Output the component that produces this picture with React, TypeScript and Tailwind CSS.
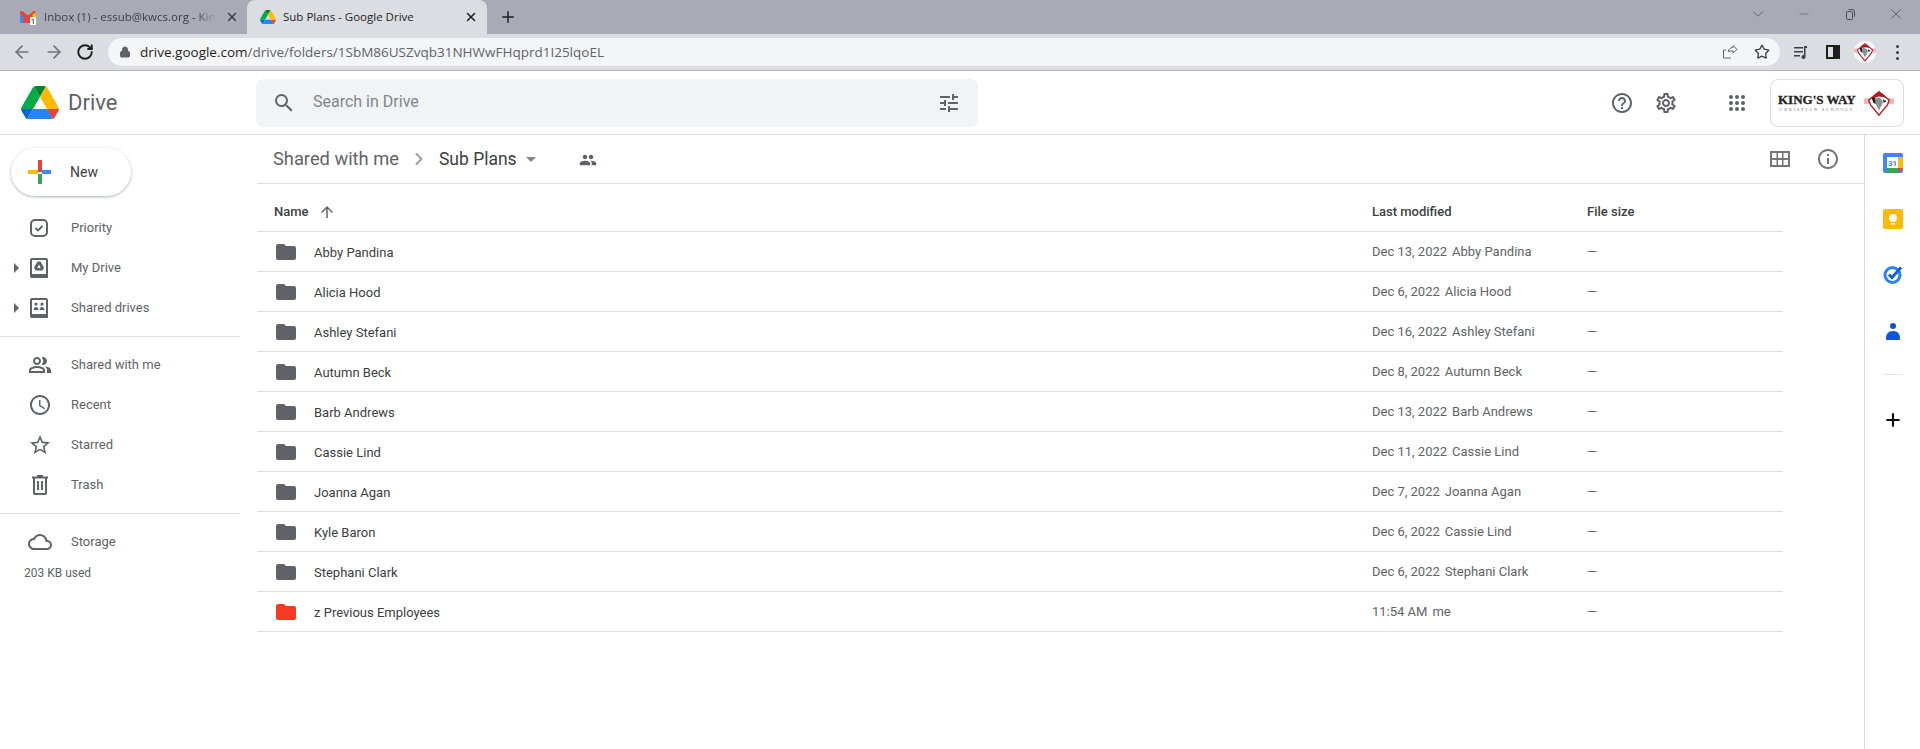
import {
  ArrowLeft,
  ArrowRight,
  ChevronDown,
  ChevronRight,
  Lock,
  Minus,
  Plus,
  RotateCw,
  Star,
  X,
} from "lucide-react";
import {
  MdAccessTime,
  MdArrowUpward,
  MdOutlineCloud,
  MdOutlineHelpOutline,
  MdOutlineInfo,
  MdOutlinePeopleAlt,
  MdOutlineSettings,
  MdOutlineStarBorder,
  MdPeople,
  MdSearch,
  MdTune,
} from "react-icons/md";

const rows = [
  { name: "Abby Pandina", date: "Dec 13, 2022", owner: "Abby Pandina" },
  { name: "Alicia Hood", date: "Dec 6, 2022", owner: "Alicia Hood" },
  { name: "Ashley Stefani", date: "Dec 16, 2022", owner: "Ashley Stefani" },
  { name: "Autumn Beck", date: "Dec 8, 2022", owner: "Autumn Beck" },
  { name: "Barb Andrews", date: "Dec 13, 2022", owner: "Barb Andrews" },
  { name: "Cassie Lind", date: "Dec 11, 2022", owner: "Cassie Lind" },
  { name: "Joanna Agan", date: "Dec 7, 2022", owner: "Joanna Agan" },
  { name: "Kyle Baron", date: "Dec 6, 2022", owner: "Cassie Lind" },
  { name: "Stephani Clark", date: "Dec 6, 2022", owner: "Stephani Clark" },
  { name: "z Previous Employees", date: "11:54 AM", owner: "me", red: true },
];

function DriveLogo({ size }: { size: number }) {
  return (
    <svg width={size} height={size * 0.89} viewBox="0 0 87.3 78">
      <path d="m6.6 66.85 3.85 6.65c.8 1.4 1.95 2.5 3.3 3.3l13.75-23.8h-27.5c0 1.55.4 3.1 1.2 4.5z" fill="#0066da" />
      <path d="m43.65 25-13.75-23.8c-1.35.8-2.5 1.9-3.3 3.3l-25.4 44a9.06 9.06 0 0 0 -1.2 4.5h27.5z" fill="#00ac47" />
      <path d="m73.55 76.8c1.35-.8 2.5-1.9 3.3-3.3l1.6-2.75 7.65-13.25c.8-1.4 1.2-2.95 1.2-4.5h-27.5l5.85 11.5z" fill="#ea4335" />
      <path d="m43.65 25 13.75-23.8c-1.35-.8-2.9-1.2-4.5-1.2h-18.5c-1.6 0-3.15.45-4.5 1.2z" fill="#00832d" />
      <path d="m59.8 53h-32.3l-13.75 23.8c1.35.8 2.9 1.2 4.5 1.2h50.8c1.6 0 3.15-.45 4.5-1.2z" fill="#2684fc" />
      <path d="m73.4 26.5-12.7-22c-.8-1.4-1.95-2.5-3.3-3.3l-13.75 23.8 16.15 28h27.45c0-1.55-.4-3.1-1.2-4.5z" fill="#ffba00" />
    </svg>
  );
}

function GmailIcon() {
  return (
    <svg width="16" height="16" viewBox="0 0 16 16" className="shrink-0">
      <path d="M0 3.500C0 2 1.500 1.500 2.500 2.300L8 6.500l5.500-4.200C14.500 1.500 16 2 16 3.500V8h-5v6H13 3V7.500L0 5.500z" fill="#ea4335" />
      <path d="M0 5v8c0 .6.400 1 1 1h2.500V7.500z" fill="#4285f4" />
      <path d="M12.500 5.500L16 3v5h-3.500z" fill="#fbbc04" />
      <rect x="10" y="8" width="6" height="8" fill="#fff" />
      <text x="13" y="15" fontSize="8" textAnchor="middle" fill="#111" fontFamily="Roboto, sans-serif">1</text>
    </svg>
  );
}

function Crest({ size }: { size: number }) {
  return (
    <svg width={size} height={size} viewBox="0 0 32 32">
      <circle cx="16" cy="16" r="16" fill="#fff" />
      <path d="M0 11h32v6H0z" fill="#efb7bd" />
      <path d="M16 4l11 9-2 5-9 11-9-11-2-5z" fill="#fff" stroke="#b71c1c" strokeWidth="1.500" />
      <path d="M9 11q2-6 8-6 5 1 6 5l-7-1z" fill="#b71c1c" />
      <path d="M8 10h4l1 7-3-1z" fill="#222" />
      <path d="M13 10q7 0 7 6l-4 8-4-8z" fill="#8b8f96" />
      <path d="M20 12l4 2-3 2z" fill="#222" />
    </svg>
  );
}

function Folder({ red }: { red?: boolean }) {
  return (
    <svg width="24" height="24" viewBox="0 0 24 24" fill={red ? "#f83a22" : "#5f6368"}>
      <path d="M10 4H4c-1.1 0-2 .9-2 2v12c0 1.1.9 2 2 2h16c1.1 0 2-.9 2-2V8c0-1.1-.9-2-2-2h-8l-2-2z" />
    </svg>
  );
}

function Caret() {
  return <span className="h-0 w-0 border-y-[5px] border-l-[5px] border-y-transparent border-l-[#5f6368]" />;
}

function BookIcon({ shared }: { shared?: boolean }) {
  return (
    <svg width="24" height="24" viewBox="0 0 24 24" fill="none">
      <path d="M4 3h14a1 1 0 0 1 1 1v17H4a1 1 0 0 1-1-1V4a1 1 0 0 1 1-1z" stroke="#5f6368" strokeWidth="2" />
      <rect x="3" y="18" width="16" height="4" fill="#5f6368" />
      {shared ? (
        <path d="M8 6.500a1.600 1.600 0 1 1 0 3.200 1.600 1.600 0 0 1 0-3.200zm6 0a1.600 1.600 0 1 1 0 3.200 1.600 1.600 0 0 1 0-3.200zM5.500 14c0-2 1.500-3 2.500-3s2.500 1 2.500 3zm6 0c0-2 1.500-3 2.500-3s2.500 1 2.500 3z" fill="#5f6368" />
      ) : (
        <path d="M9.500 5.500h3l3.500 6-1.500 3h-7L6 11.500zM11 8.500l-1.700 3.500h3.400z" fill="#5f6368" fillRule="evenodd" />
      )}
    </svg>
  );
}

function PriorityIcon() {
  return (
    <svg width="24" height="24" viewBox="0 0 24 24" fill="none" stroke="#5f6368">
      <rect x="3" y="4" width="16" height="16" rx="4" strokeWidth="2" />
      <path d="M7.500 12l2.500 2.500 4.500-4.500" strokeWidth="1.800" />
    </svg>
  );
}

function TrashIcon() {
  return (
    <svg width="24" height="24" viewBox="0 0 24 24" fill="none" stroke="#5f6368" strokeWidth="2">
      <path d="M4 4.500h16M9 3h6M6 4.500V20a1 1 0 0 0 1 1h10a1 1 0 0 0 1-1V4.500M10 8v9M14 8v9" />
    </svg>
  );
}

function NavItem({ icon, label, caret }: { icon: React.ReactNode; label: string; caret?: boolean }) {
  return (
    <div className="flex h-10 items-center">
      <div className="flex w-[28px] justify-end pr-[9px]">{caret && <Caret />}</div>
      <div className="flex w-[24px] justify-center">{icon}</div>
      <span className="ml-[19px] text-[13px] text-[#5f6368]">{label}</span>
    </div>
  );
}

function Sidebar() {
  return (
    <aside className="w-[257px] shrink-0">
      <div className="pl-[11px] pt-[13px]">
        <button className="flex h-12 w-[120px] items-center rounded-full bg-white pl-4 shadow-[0_1px_3px_rgba(60,64,67,0.4)]">
          <svg width="24" height="24" viewBox="0 0 24 24">
            <rect x="11" y="0" width="4" height="12" fill="#ea4335" />
            <rect x="15" y="10" width="10" height="4" fill="#4285f4" />
            <rect x="11" y="14" width="4" height="10" fill="#34a853" />
            <rect x="1" y="10" width="10" height="4" fill="#fbbc04" />
          </svg>
          <span className="ml-[19px] text-[14px] text-[#3c4043]">New</span>
        </button>
      </div>
      <div className="mt-3 w-[240px] border-b border-[#dadce0] pb-2">
        <NavItem icon={<PriorityIcon />} label="Priority" />
        <NavItem icon={<BookIcon />} label="My Drive" caret />
        <NavItem icon={<BookIcon shared />} label="Shared drives" caret />
      </div>
      <div className="mt-2 w-[240px] border-b border-[#dadce0] pb-2">
        <NavItem icon={<MdOutlinePeopleAlt size={24} color="#5f6368" />} label="Shared with me" />
        <NavItem icon={<MdAccessTime size={24} color="#5f6368" />} label="Recent" />
        <NavItem icon={<MdOutlineStarBorder size={24} color="#5f6368" />} label="Starred" />
        <NavItem icon={<TrashIcon />} label="Trash" />
      </div>
      <div className="mt-2">
        <NavItem icon={<MdOutlineCloud size={26} color="#5f6368" />} label="Storage" />
        <p className="ml-6 mt-[2px] text-[12px] text-[#5f6368]">203 KB used</p>
      </div>
    </aside>
  );
}

function TableHeader() {
  return (
    <div className="mr-[81px] flex h-12 items-center border-b border-[#dadce0] pt-[8px] text-[13px] font-medium text-[#3c4043]">
      <div className="flex w-[1115px] items-center pl-[17px]">
        <span>Name</span>
        <MdArrowUpward size={18} color="#5f6368" className="ml-[9px]" />
      </div>
      <div className="w-[215px]">Last modified</div>
      <div>File size</div>
    </div>
  );
}

function FileRow({ name, date, owner, red }: { name: string; date: string; owner: string; red?: boolean }) {
  return (
    <div className="mr-[81px] flex h-10 items-center border-b border-[#dadce0] text-[13px]">
      <div className="flex w-[1115px] items-center pl-[17px]">
        <Folder red={red} />
        <span className="ml-[16px] pt-[2px] font-[450] text-[#3c4043]">{name}</span>
      </div>
      <div className="flex w-[215px] gap-[5px] text-[#5f6368]">
        <span>{date}</span>
        <span>{owner}</span>
      </div>
      <div className="text-[#5f6368]">—</div>
    </div>
  );
}

function RightRail() {
  return (
    <aside className="flex w-[56px] shrink-0 flex-col items-center border-l border-[#dadce0] pt-[18px]">
      <svg width="20" height="20" viewBox="0 0 20 20">
        <rect width="20" height="20" rx="2" fill="#4285f4" />
        <rect x="15" y="4" width="5" height="12" fill="#fbbc04" />
        <rect x="4" y="15" width="12" height="5" fill="#34a853" />
        <path d="M15 15h5l-5 5z" fill="#ea4335" />
        <rect x="4" y="4" width="11" height="11" fill="#fff" />
        <text x="9.500" y="13" fontSize="8" fontWeight="700" textAnchor="middle" fill="#4285f4" fontFamily="Roboto, sans-serif">31</text>
      </svg>
      <svg className="mt-[36px]" width="20" height="20" viewBox="0 0 20 20">
        <rect width="20" height="20" rx="2" fill="#ffba00" />
        <circle cx="10" cy="9" r="4" fill="#fff" />
        <rect x="8" y="14" width="4" height="1.500" fill="#fff" />
      </svg>
      <svg className="mt-[35px]" width="20" height="20" viewBox="0 0 20 20" fill="none">
        <circle cx="9.500" cy="11" r="7.500" stroke="#2684fc" strokeWidth="3" />
        <path d="M6 10.500l3 3 9-10" stroke="#1a5fd0" strokeWidth="3" />
      </svg>
      <svg className="mt-[37px]" width="20" height="20" viewBox="0 0 20 20">
        <circle cx="10" cy="5" r="3" fill="#0b57d0" />
        <path d="M3 18c0-5 2-8 7-8s7 3 7 8c0 1-1 1-1 1H4s-1 0-1-1z" fill="#0b57d0" />
      </svg>
      <div className="mt-[33px] h-px w-5 bg-[#e3e5e8]" />
      <Plus size={20} color="#111" className="mt-[35px]" strokeWidth={2.6} />
    </aside>
  );
}

function WinBox({ children }: { children: React.ReactNode }) {
  return <div className="flex w-[46px] justify-center">{children}</div>;
}

function ToolBox({ children }: { children: React.ReactNode }) {
  return <div className="flex w-8 justify-center">{children}</div>;
}

export default function App() {
  return (
    <div className="flex h-[749px] flex-col overflow-hidden bg-white font-['Roboto',sans-serif]">
      {/* browser chrome */}
      <div className="flex h-[34px] items-end bg-[#a8abb6] font-['Open_Sans',sans-serif] text-[11.500px]">
        <div className="flex h-[34px] w-[247px] items-center pl-5 text-[#3c4043]">
          <GmailIcon />
          <span className="ml-[8px] w-[172px] whitespace-nowrap [mask-image:linear-gradient(to_right,black_88%,transparent)]">Inbox (1) - essub@kwcs.org - Kin</span>
          <X size={14} className="ml-[9px] shrink-0" strokeWidth={2.5} />
        </div>
        <div className="flex h-[34px] w-[240px] items-center rounded-t-lg bg-[#dcdde2] pl-[13px] text-[#1f1f1f]">
          <DriveLogo size={16} />
          <span className="ml-[7px] w-[181px] whitespace-nowrap">Sub Plans - Google Drive</span>
          <X size={14} className="shrink-0" strokeWidth={2.5} />
        </div>
        <div className="flex h-[34px] w-[42px] items-center justify-center">
          <Plus size={18} color="#1f1f1f" strokeWidth={2} />
        </div>
        <div className="ml-auto flex h-[34px] items-center pb-[6px] pr-px">
          <WinBox><ChevronDown size={18} strokeWidth={1} color="#4b4d52" /></WinBox>
          <WinBox><Minus size={14} strokeWidth={1} color="#4b4d52" /></WinBox>
          <WinBox>
            <svg width="12" height="12" viewBox="0 0 12 12" fill="none" stroke="#4b4d52">
              <rect x="2.500" y="3.500" width="6" height="8" rx="1" />
              <path d="M4.500 1.500h4a2 2 0 0 1 2 2v5" />
            </svg>
          </WinBox>
          <WinBox><X size={18} strokeWidth={1} color="#4b4d52" /></WinBox>
        </div>
      </div>
      <div className="flex h-[37px] items-center border-b border-[#b3b3b8] bg-[#dcdde2]">
        <div className="flex w-[108px] items-center gap-[12px] pl-[12px]">
          <ArrowLeft size={20} color="#70747a" />
          <ArrowRight size={20} color="#70747a" />
          <RotateCw size={18} color="#1f1f1f" strokeWidth={2.5} />
        </div>
        <div className="flex h-7 flex-1 items-center rounded-full bg-[#f4f5f7] pl-[11px] pr-[10px]">
          <Lock size={12} fill="#5f6368" color="#5f6368" />
          <span className="ml-[9px] font-['Open_Sans',sans-serif] text-[13.500px] text-[#5f6368]">
            <span className="text-[#1f1f1f]">drive.google.com</span>/drive/folders/1SbM86USZvqb31NHWwFHqprd1I25lqoEL
          </span>
          <svg className="ml-auto" width="16" height="16" viewBox="0 0 16 16" fill="none" stroke="#5f6368">
            <path d="M6 7.500c1-3 3-4 5-4V1.500l4 4-4 3.500V7c-2 0-4 0-5 .5zM9 14H1.500V6H4" />
          </svg>
          <Star size={16} color="#3c4043" className="ml-[16px]" />
        </div>
        <div className="flex w-[140px] items-center pl-[5px]">
          <ToolBox>
            <svg width="16" height="16" viewBox="0 0 16 16" fill="#3c4043">
              <path d="M1 3h9v1.500H1zM1 7h9v1.500H1zM1 11h6v1.500H1zM11 2h3v2h-1.500v9a2 2 0 1 1-1.500-2z" />
            </svg>
          </ToolBox>
          <ToolBox>
            <div className="h-[14px] w-[14px] border-[2px] border-r-[7px] border-[#1f1f1f]" />
          </ToolBox>
          <ToolBox><Crest size={22} /></ToolBox>
          <ToolBox>
            <div className="flex flex-col gap-[3px]">
              <span className="h-[3px] w-[3px] rounded-full bg-[#3c4043]" />
              <span className="h-[3px] w-[3px] rounded-full bg-[#3c4043]" />
              <span className="h-[3px] w-[3px] rounded-full bg-[#3c4043]" />
            </div>
          </ToolBox>
        </div>
      </div>

      {/* drive header */}
      <header className="flex h-[64px] shrink-0 items-center border-b border-[#dadce0]">
        <div className="flex w-[256px] items-center pl-[21px]">
          <DriveLogo size={38} />
          <span className="ml-[9px] text-[22px] text-[#5f6368]">Drive</span>
        </div>
        <div className="flex h-12 w-[722px] items-center rounded-lg bg-[#f1f3f4] pl-[16px] pr-[16px]">
          <MdSearch size={24} color="#5f6368" />
          <span className="ml-[17px] pb-[1px] text-[16px] text-[#80868b]">Search in Drive</span>
          <MdTune size={24} color="#5f6368" className="ml-auto mr-[1px]" />
        </div>
        <div className="ml-auto flex items-center">
          <MdOutlineHelpOutline size={24} color="#5f6368" />
          <MdOutlineSettings size={24} color="#5f6368" className="ml-[20px]" />
          <div className="ml-[51px] grid grid-cols-3 gap-[2px]">
            {Array.from({ length: 9 }).map((_, i) => (
              <span key={i} className="h-1 w-1 rounded-full bg-[#5f6368]" />
            ))}
          </div>
          <div className="ml-[25px] mr-[16px] flex h-12 w-[134px] items-center rounded-lg border border-[#dadce0] pl-[7px]">
            <div className="flex flex-col items-center font-['Liberation_Serif',serif]">
              <span className="text-[13px] leading-[14px] font-bold text-[#222] [-webkit-text-stroke:0.3px_#222]">KING'S WAY</span>
              <span className="text-[4px] leading-[5px] tracking-[2px] text-[#666]">CHRISTIAN SCHOOLS</span>
            </div>
            <div className="ml-[8px]"><Crest size={30} /></div>
          </div>
        </div>
      </header>

      <div className="flex min-h-0 flex-1">
        <Sidebar />
        <main className="min-w-0 flex-1">
          <div className="flex h-[49px] items-center border-b border-[#dadce0] pl-4">
            <span className="text-[18.300px] text-[#5f6368]">Shared with me</span>
            <ChevronRight size={20} color="#9aa0a6" className="ml-[10px]" strokeWidth={2.5} />
            <span className="ml-[10px] text-[17.500px] text-[#3c4043]">Sub Plans</span>
            <span className="ml-[9px] h-0 w-0 border-x-[5px] border-t-[5px] border-x-transparent border-t-[#80868b]" />
            <MdPeople size={18} color="#5f6368" className="ml-[43px] mt-[2px]" />
            <svg className="ml-auto" width="20" height="16" viewBox="0 0 20 16" fill="#757575">
              <path d="M0 0h20v16H0zM2 2v5h4.500V2zM8 2v5h4V2zM13.500 2v5H18V2zM2 9v5h4.500V9zM8 9v5h4V9zM13.500 9v5H18V9z" fillRule="evenodd" />
            </svg>
            <MdOutlineInfo size={24} color="#757575" className="ml-[26px] mr-[24px]" />
          </div>
          <TableHeader />
          {rows.map((r) => (
            <FileRow key={r.name} {...r} />
          ))}
        </main>
        <RightRail />
      </div>
    </div>
  );
}
